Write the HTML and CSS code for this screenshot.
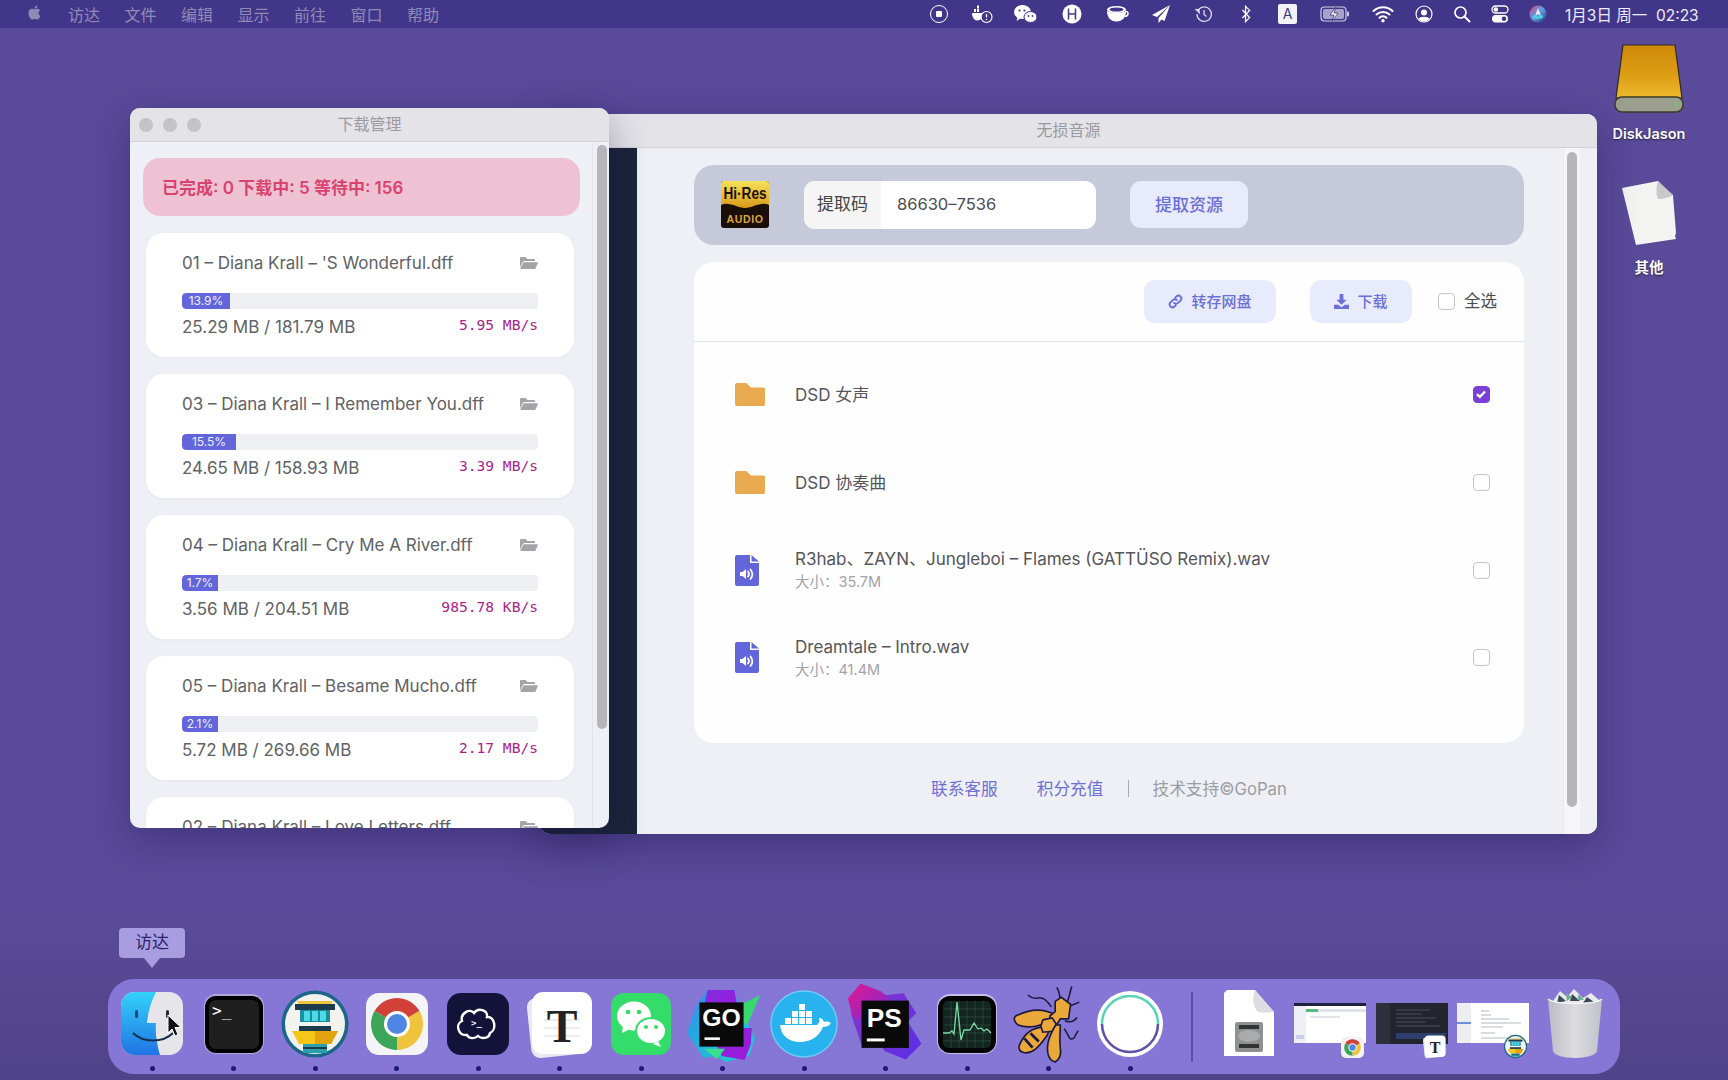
FILE: index.html
```html
<!DOCTYPE html>
<html lang="zh-CN">
<head>
<meta charset="utf-8">
<title>无损音源</title>
<link rel="stylesheet" href="styles.css">
</head>
<body>
<svg class="defs" width="0" height="0" aria-hidden="true">
  <defs>
    <symbol id="folder-open" viewBox="0 0 18 14">
      <path d="M0 12V2a1 1 0 0 1 1-1h4.500l2 2H14a1 1 0 0 1 1 1v1H4.600a2 2 0 0 0-1.800 1.100L0 11.500z"/>
      <path d="M3.600 6.300h13.600c.6 0 .9.5.6 1l-2.300 5.200a1 1 0 0 1-.9.5H1a.6.6 0 0 1-.5-.9z"/>
    </symbol>
    <symbol id="folder" viewBox="0 0 30 23">
      <path d="M0 2a2 2 0 0 1 2-2h9.500L16 4.500h12a2 2 0 0 1 2 2V21a2 2 0 0 1-2 2H2a2 2 0 0 1-2-2z"/>
    </symbol>
    <symbol id="file-audio" viewBox="0 0 24 31">
      <path d="M0 2a2 2 0 0 1 2-2h13v8h9v21a2 2 0 0 1-2 2H2a2 2 0 0 1-2-2z" fill="#6366db"/>
      <path d="M16.500 0 24 6.500h-7.500z" fill="#6366db"/>
      <path d="M5 17h2.500l3.500-3v10l-3.500-3H5z" fill="#fff"/>
      <path d="M13 16.500a4 4 0 0 1 0 5M15.500 14.500a7 7 0 0 1 0 9.500" fill="none" stroke="#fff" stroke-width="1.800" stroke-linecap="round"/>
    </symbol>
    <symbol id="chrome" viewBox="0 0 72 72">
      <path d="M36 36 13.500 23A26 26 0 0 1 58.500 23z" fill="#d2403a"/>
      <path d="M36 36 58.500 23A26 26 0 0 1 36 62z" fill="#f0c33c"/>
      <path d="M36 36 36 62A26 26 0 0 1 13.500 23z" fill="#3ba55a"/>
      <circle cx="36" cy="36" r="13" fill="#fff"/>
      <circle cx="36" cy="36" r="10" fill="#4f86e6"/>
    </symbol>
    <symbol id="tower" viewBox="0 0 72 72">
      <circle cx="36" cy="36" r="33.500" fill="#1c6787"/>
      <circle cx="36" cy="36" r="30" fill="#f2f2ee"/>
      <path d="M18 13h36l-2 3H20z" fill="#f0c33c"/>
      <rect x="16" y="16" width="40" height="6" fill="#1e3b4e"/>
      <rect x="21" y="22" width="30" height="12" fill="#1b8f9f"/>
      <rect x="25" y="23" width="6" height="10" fill="#4ed9e6"/>
      <rect x="33" y="23" width="6" height="10" fill="#4ed9e6"/>
      <rect x="41" y="23" width="6" height="10" fill="#4ed9e6"/>
      <rect x="20" y="38" width="32" height="5" fill="#1e3b4e"/>
      <path d="M13 43h46l-7 13H20z" fill="#f5c518"/>
      <path d="M36 43h23l-7 13H36z" fill="#e2a30f"/>
      <rect x="24" y="56" width="24" height="9" fill="#2a9fb0"/>
      <rect x="24" y="59" width="24" height="2" fill="#1e3b4e"/>
    </symbol>
    <symbol id="typora" viewBox="0 0 72 72">
      <rect x="5" y="8" width="58" height="60" rx="9" fill="#e9e9ef" transform="rotate(-6 34 38)"/>
      <rect x="8" y="4" width="60" height="62" rx="11" fill="#fff"/>
      <path d="M20 24h36M20 32h36M20 40h36M20 48h36" stroke="#ececef" stroke-width="2"/>
      <text x="38" y="54" class="typora-t" text-anchor="middle">T</text>
    </symbol>
    <clipPath id="finder-clip"><rect x="5" y="4" width="62" height="63" rx="14"/></clipPath>
    <linearGradient id="finder-blue" x1="0" y1="0" x2="0" y2="1"><stop offset="0" stop-color="#34d1fa"/><stop offset="1" stop-color="#1f74e4"/></linearGradient>
    <linearGradient id="disk-gold" x1="0" y1="0" x2="0" y2="1"><stop offset="0" stop-color="#d08a0a"/><stop offset=".55" stop-color="#dc9c14"/><stop offset="1" stop-color="#eeb92e"/></linearGradient>
    <linearGradient id="go-a" x1="0" y1="0" x2="1" y2="1"><stop offset="0" stop-color="#2f8cf0"/><stop offset="1" stop-color="#19d8c8"/></linearGradient>
    <linearGradient id="go-b" x1="0" y1="0" x2="1" y2="1"><stop offset="0" stop-color="#7b2ee0"/><stop offset="1" stop-color="#a416d8"/></linearGradient>
    <linearGradient id="ps-a" x1="0" y1="0" x2="1" y2="1"><stop offset="0" stop-color="#e5168c"/><stop offset="1" stop-color="#7a2cd8"/></linearGradient>
    <linearGradient id="ps-b" x1="0" y1="0" x2="1" y2="1"><stop offset="0" stop-color="#8a35c8"/><stop offset="1" stop-color="#5a2ee6"/></linearGradient>
    <linearGradient id="hires" x1="0" y1="0" x2="0" y2="1"><stop offset="0" stop-color="#f6e25a"/><stop offset="1" stop-color="#d79a18"/></linearGradient>
    <linearGradient id="siri" x1="0" y1="0" x2="1" y2="1"><stop offset="0" stop-color="#d8407a"/><stop offset=".5" stop-color="#5aa0e8"/><stop offset="1" stop-color="#2a2a6a"/></linearGradient>
    <linearGradient id="trash" x1="0" y1="0" x2="1" y2="0"><stop offset="0" stop-color="#bdbcc6"/><stop offset=".5" stop-color="#dcdce0"/><stop offset="1" stop-color="#c2c1cb"/></linearGradient>
  </defs>
</svg>

<header class="menubar">
  <svg class="apple" viewBox="0 0 24 24"><path d="M17.050 20.280c-.98.95-2.050.8-3.080.35-1.090-.46-2.090-.48-3.240 0-1.440.62-2.200.44-3.060-.35C2.790 15.250 3.510 7.590 9.050 7.310c1.350.07 2.290.74 3.080.8 1.180-.24 2.310-.93 3.570-.84 1.510.12 2.650.72 3.400 1.800-3.120 1.870-2.380 5.980.48 7.130-.57 1.500-1.310 2.990-2.540 4.090zM12.030 7.250c-.15-2.230 1.660-4.070 3.740-4.250.29 2.580-2.340 4.500-3.740 4.250z"/></svg>
  <nav class="menus">
    <span class="menu-item">访达</span><span class="menu-item">文件</span><span class="menu-item">编辑</span><span class="menu-item">显示</span><span class="menu-item">前往</span><span class="menu-item">窗口</span><span class="menu-item">帮助</span>
  </nav>
  <div class="tray">
    <svg class="tray-icon" viewBox="0 0 20 20"><circle cx="10" cy="10" r="8.500" fill="none" stroke="#fff" stroke-width="1"/><rect x="7" y="7" width="6" height="6" rx="1" fill="#fff"/></svg>
    <svg class="tray-icon" viewBox="0 0 22 20"><path d="M2 9h9a1 1 0 0 1 .5 1.800c-.3 3.600-2 5.700-5 5.700-3 0-4.500-2-5.500-6A1 1 0 0 1 2 9z" fill="#fff"/><path d="M3 5h2v3H3zM6 5h2v3H6zM6 1.500h2v3H6z" fill="#fff"/><circle cx="15.500" cy="13" r="5.500" fill="#42368a" stroke="#fff" stroke-width="1.200"/><path d="M15.500 10v3.500M15.500 15v1" stroke="#fff" stroke-width="1.300"/></svg>
    <svg class="tray-icon wide" viewBox="0 0 24 20"><ellipse cx="9" cy="8" rx="8.500" ry="7" fill="#fff"/><path d="M4 13l-1 4 4-2.500z" fill="#fff"/><ellipse cx="17" cy="13" rx="6.500" ry="5.500" fill="#fff" stroke="#42368a" stroke-width="1"/><circle cx="6" cy="6.500" r="1.100" fill="#42368a"/><circle cx="11" cy="6.500" r="1.100" fill="#42368a"/><circle cx="15" cy="12" r=".9" fill="#42368a"/><circle cx="19" cy="12" r=".9" fill="#42368a"/></svg>
    <svg class="tray-icon" viewBox="0 0 20 20"><circle cx="10" cy="10" r="9.500" fill="#fff"/><path d="M6.500 4.500v11M13.500 4.500v11M6.500 10h7" stroke="#42368a" stroke-width="1.500" fill="none"/></svg>
    <svg class="tray-icon wide" viewBox="0 0 24 20"><ellipse cx="11" cy="5.500" rx="9.500" ry="3.500" fill="#fff"/><path d="M1.500 6.500c0 7 3.500 11 9.500 11s9.500-4 9.500-11c-2 3-17 3-19 0z" fill="#fff"/><path d="M20 7.500c3.500-.5 3.500 4.500-.8 5" fill="none" stroke="#fff" stroke-width="1.500"/><ellipse cx="11" cy="5.500" rx="7" ry="2" fill="#42368a"/></svg>
    <svg class="tray-icon" viewBox="0 0 20 20"><path d="M19 1 1 11l5 2zM19 1 7.500 14v5l3-3.500 3 1.500z" fill="#fff"/></svg>
    <svg class="tray-icon small" viewBox="0 0 18 18"><path d="M3 5.500A7.200 7.200 0 1 1 2 9" fill="none" stroke="#e4e2f0" stroke-width="1.200"/><path d="M1 4.500l3 .2.200 3zM9 5v4.500l2.500 2" fill="none" stroke="#e4e2f0" stroke-width="1.200"/></svg>
    <svg class="tray-icon small" viewBox="0 0 12 20"><path d="M2 5.500l8 8.500-4.500 4.500V1.500L10 6l-8 8.500" fill="none" stroke="#fff" stroke-width="1.400"/></svg>
    <span class="tray-a">A</span>
    <svg class="tray-icon battery" viewBox="0 0 30 18"><rect x="1" y="2" width="25" height="14" rx="3.500" fill="none" stroke="#cfcde0" stroke-width="1.200"/><rect x="3" y="4" width="21" height="10" rx="2" fill="#a7a3c8"/><rect x="27" y="6.500" width="2" height="5" rx="1" fill="#cfcde0"/><path d="M16 2l-6 8h4l-2 6 6-8h-4z" fill="#fff" stroke="#42368a" stroke-width=".8"/></svg>
    <svg class="tray-icon" viewBox="0 0 22 18"><path d="M1.500 6a14 14 0 0 1 19 0M4.500 9.500a9.500 9.500 0 0 1 13 0M7.500 12.800a5 5 0 0 1 7 0" fill="none" stroke="#fff" stroke-width="2" stroke-linecap="round"/><circle cx="11" cy="15.800" r="1.700" fill="#fff"/></svg>
    <svg class="tray-icon small" viewBox="0 0 18 18"><circle cx="9" cy="9" r="8" fill="none" stroke="#fff" stroke-width="1.200"/><circle cx="9" cy="7.500" r="3" fill="#fff"/><path d="M3.500 14c1-3 10-3 11 0a7.500 7.500 0 0 1-11 0z" fill="#fff"/></svg>
    <svg class="tray-icon small" viewBox="0 0 18 18"><circle cx="7.500" cy="7.500" r="5.500" fill="none" stroke="#fff" stroke-width="1.700"/><path d="M11.500 11.500 16.500 16.500" stroke="#fff" stroke-width="2" stroke-linecap="round"/></svg>
    <svg class="tray-icon small" viewBox="0 0 18 18"><rect x="1" y="1" width="16" height="7" rx="3.500" fill="none" stroke="#fff" stroke-width="1.300"/><circle cx="4.800" cy="4.500" r="2.300" fill="#fff"/><rect x="1" y="10" width="16" height="7.500" rx="3.700" fill="#fff"/><circle cx="13" cy="13.700" r="2.300" fill="#42368a"/></svg>
    <svg class="tray-icon small" viewBox="0 0 18 18"><circle cx="9" cy="9" r="8.500" fill="url(#siri)"/><path d="M9 3l3 8-3-2-3 2z" fill="#f2e9ff"/><path d="M3.500 12c2-3 3.500-3 5.500 0 2-3 3.500-3 5.500 0-2 2.500-9 2.500-11 0z" fill="#4fd0e0"/></svg>
  </div>
  <time class="clock">1月3日 周一&nbsp; 02:23</time>
</header>

<main class="desktop">
  <figure class="desk-icon disk">
    <svg class="disk-art" viewBox="0 0 70 72">
      <path d="M9 2h52l7 53H2z" fill="url(#disk-gold)" stroke="#2d2a20" stroke-width="1.200"/>
      <rect x="1" y="54" width="68" height="15" rx="7" fill="#9a9f8e" stroke="#3d3a26" stroke-width="1.500"/>
      <circle cx="62" cy="61.500" r="1.400" fill="#5fcf6a"/>
    </svg>
    <figcaption class="desk-label">DiskJason</figcaption>
  </figure>
  <figure class="desk-icon other">
    <svg class="doc-art" viewBox="0 0 56 66">
      <path d="M1 8 37 1c3 5 8 9 15 14l3 38-1 3 1 3-40 6z" fill="#f4f4f2"/>
      <path d="M37 1c-2 6-2 14 0 18 6 0 13-2 15-4z" fill="#c9c9cc"/>
    </svg>
    <figcaption class="desk-label">其他</figcaption>
  </figure>

  <section class="window app-window">
    <div class="titlebar"><span class="title">无损音源</span></div>
    <div class="app-body">
      <aside class="sidebar"></aside>
      <div class="app-main">
        <div class="app-content">
          <div class="code-bar">
            <svg class="hires" viewBox="0 0 48 47">
              <rect width="48" height="47" rx="3" fill="#1a0f08"/>
              <path d="M0 3a3 3 0 0 1 3-3h42a3 3 0 0 1 3 3v21c-8-4-16 3-24 3S8 20 0 24z" fill="url(#hires)"/>
              <text class="hires-top" text-anchor="middle" transform="translate(24 18) scale(.8 1)">Hi·Res</text>
              <text x="24" y="42" class="hires-bottom" text-anchor="middle">AUDIO</text>
            </svg>
            <div class="code-input">
              <span class="code-label">提取码</span>
              <span class="code-value">86630–7536</span>
            </div>
            <button class="btn btn-fetch">提取资源</button>
          </div>
          <div class="file-card">
            <div class="toolbar">
              <button class="btn btn-save">
                <svg class="btn-icon" viewBox="0 0 16 16"><path d="M6.500 9.500a3 3 0 0 0 4.300 0l2.500-2.500a3 3 0 0 0-4.300-4.300L7.800 3.900M9.500 6.500a3 3 0 0 0-4.300 0L2.700 9a3 3 0 0 0 4.300 4.300l1.200-1.200" fill="none" stroke="#6c6fd6" stroke-width="2" stroke-linecap="round"/></svg>
                转存网盘
              </button>
              <button class="btn btn-down">
                <svg class="btn-icon" viewBox="0 0 16 16"><path d="M6 0h4v6h3.500L8 11.500 2.500 6H6z" fill="#6c6fd6"/><path d="M0 11.500h4.500L8 14l3.500-2.500H16V16H0z" fill="#6c6fd6"/></svg>
                下载
              </button>
              <label class="select-all"><span class="check"></span><span class="select-text">全选</span></label>
            </div>
            <ul class="file-list">
              <li class="file-row">
                <svg class="icon-folder"><use href="#folder"/></svg>
                <div class="file-text"><div class="file-name">DSD 女声</div></div>
                <span class="check checked"><svg viewBox="0 0 12 12"><path d="M2.500 6.200 5 8.500 9.500 3.800" fill="none" stroke="#fff" stroke-width="2"/></svg></span>
              </li>
              <li class="file-row">
                <svg class="icon-folder"><use href="#folder"/></svg>
                <div class="file-text"><div class="file-name">DSD 协奏曲</div></div>
                <span class="check"></span>
              </li>
              <li class="file-row">
                <svg class="icon-file"><use href="#file-audio"/></svg>
                <div class="file-text"><div class="file-name">R3hab、ZAYN、Jungleboi – Flames (GATTÜSO Remix).wav</div><div class="file-size">大小：35.7M</div></div>
                <span class="check"></span>
              </li>
              <li class="file-row">
                <svg class="icon-file"><use href="#file-audio"/></svg>
                <div class="file-text"><div class="file-name">Dreamtale – Intro.wav</div><div class="file-size">大小：41.4M</div></div>
                <span class="check"></span>
              </li>
            </ul>
          </div>
          <footer class="app-footer">
            <a class="foot-link">联系客服</a>
            <a class="foot-link">积分充值</a>
            <span class="foot-sep"></span>
            <span class="foot-note">技术支持©GoPan</span>
          </footer>
        </div>
        <div class="scrolltrack app-track"><div class="scrollthumb app-thumb"></div></div>
      </div>
    </div>
  </section>

  <section class="window dl-window">
    <div class="titlebar">
      <div class="lights"><i class="light"></i><i class="light"></i><i class="light"></i></div>
      <span class="title">下载管理</span>
    </div>
    <div class="dl-body">
      <div class="dl-content">
        <div class="dl-banner">已完成: 0 下载中: 5 等待中: 156</div>
        <article class="dl-card">
          <div class="dl-head"><span class="dl-name">01 – Diana Krall – 'S Wonderful.dff</span><svg class="dl-folder"><use href="#folder-open"/></svg></div>
          <div class="bar"><div class="bar-fill" style="width:48px">13.9%</div></div>
          <div class="dl-stats"><span class="dl-size">25.29 MB / 181.79 MB</span><span class="dl-speed">5.95 MB/s</span></div>
        </article>
        <article class="dl-card">
          <div class="dl-head"><span class="dl-name">03 – Diana Krall – I Remember You.dff</span><svg class="dl-folder"><use href="#folder-open"/></svg></div>
          <div class="bar"><div class="bar-fill" style="width:54px">15.5%</div></div>
          <div class="dl-stats"><span class="dl-size">24.65 MB / 158.93 MB</span><span class="dl-speed">3.39 MB/s</span></div>
        </article>
        <article class="dl-card">
          <div class="dl-head"><span class="dl-name">04 – Diana Krall – Cry Me A River.dff</span><svg class="dl-folder"><use href="#folder-open"/></svg></div>
          <div class="bar"><div class="bar-fill" style="width:36px">1.7%</div></div>
          <div class="dl-stats"><span class="dl-size">3.56 MB / 204.51 MB</span><span class="dl-speed">985.78 KB/s</span></div>
        </article>
        <article class="dl-card">
          <div class="dl-head"><span class="dl-name">05 – Diana Krall – Besame Mucho.dff</span><svg class="dl-folder"><use href="#folder-open"/></svg></div>
          <div class="bar"><div class="bar-fill" style="width:36px">2.1%</div></div>
          <div class="dl-stats"><span class="dl-size">5.72 MB / 269.66 MB</span><span class="dl-speed">2.17 MB/s</span></div>
        </article>
        <article class="dl-card">
          <div class="dl-head"><span class="dl-name">02 – Diana Krall – Love Letters.dff</span><svg class="dl-folder"><use href="#folder-open"/></svg></div>
        </article>
      </div>
      <div class="scrolltrack dl-track"><div class="scrollthumb dl-thumb"></div></div>
    </div>
  </section>

  <div class="tooltip">访达</div>
</main>

<footer class="dock">
  <div class="dock-item">
    <svg class="dock-icon" viewBox="0 0 72 72">
      <g clip-path="url(#finder-clip)">
        <rect x="5" y="4" width="62" height="63" fill="#e6e6ea"/>
        <path d="M5 4h35c-5 10-8 20-9 31h9c-1 10 1 22 4 32H5z" fill="url(#finder-blue)"/>
      </g>
      <rect x="19" y="22" width="3" height="8" rx="1.500" fill="#23466e"/>
      <rect x="50" y="22" width="3" height="8" rx="1.500" fill="#2a2a30"/>
      <path d="M17 45c10 10 30 10 40 0" fill="none" stroke="#18304f" stroke-width="2"/>
      <path d="M52 27v18l4-4 3 7 3-1.500-3-7h6z" fill="#111" stroke="#fff" stroke-width="1"/>
    </svg>
    <i class="dot"></i>
  </div>
  <div class="dock-item">
    <svg class="dock-icon" viewBox="0 0 72 72">
      <rect x="6" y="6" width="60" height="60" rx="12" fill="#b0a8dc"/>
      <rect x="7" y="8" width="58" height="57" rx="11" fill="#000"/>
      <rect x="11" y="12" width="50" height="49" rx="7" fill="#1f1f1f"/>
      <text x="14" y="28" class="term-text">&gt;_</text>
    </svg>
    <i class="dot"></i>
  </div>
  <div class="dock-item"><svg class="dock-icon"><use href="#tower"/></svg><i class="dot"></i></div>
  <div class="dock-item">
    <svg class="dock-icon" viewBox="0 0 72 72"><rect x="5" y="5" width="62" height="62" rx="13" fill="#f4f4f6"/><use href="#chrome" x="0" y="0" width="72" height="72"/></svg>
    <i class="dot"></i>
  </div>
  <div class="dock-item">
    <svg class="dock-icon" viewBox="0 0 72 72">
      <rect x="5" y="5" width="62" height="62" rx="14" fill="#13133a"/>
      <path d="M25 47c-9 1-12-11-5-14-2-8 8-13 12-8 4-6 14-3 13 4 8-1 10 13 3 16-1 6-9 6-12 3-3 3-9 3-11-1z" fill="none" stroke="#fff" stroke-width="2.400"/>
      <text x="29" y="38" class="term-small">&gt;_</text>
    </svg>
    <i class="dot"></i>
  </div>
  <div class="dock-item"><svg class="dock-icon"><use href="#typora"/></svg><i class="dot"></i></div>
  <div class="dock-item">
    <svg class="dock-icon" viewBox="0 0 72 72">
      <rect x="6" y="5" width="60" height="62" rx="13" fill="#34dc6a"/>
      <ellipse cx="29" cy="28" rx="17" ry="14.500" fill="#fff"/>
      <path d="M18 38l-1 7 8-4z" fill="#fff"/>
      <ellipse cx="46" cy="43" rx="15" ry="13" fill="#fff" stroke="#34dc6a" stroke-width="2"/>
      <path d="M53 53l3 6-8-3z" fill="#fff"/>
      <circle cx="23" cy="24" r="2.300" fill="#34dc6a"/><circle cx="34" cy="24" r="2.300" fill="#34dc6a"/>
      <circle cx="41" cy="39" r="2" fill="#34dc6a"/><circle cx="51" cy="39" r="2" fill="#34dc6a"/>
    </svg>
    <i class="dot"></i>
  </div>
  <div class="dock-item">
    <svg class="dock-icon" viewBox="3 3 70 70">
      <path d="M12 20 23 5h26l4 15 21-10-12 28 7 14-6 17-22 6-10-6-12 2-16-24z" fill="url(#go-a)"/>
      <path d="M23 5h26l4 22-35 0z" fill="url(#go-b)"/>
      <path d="M50 42h16l-1 16-6 15-22-4-8-16z" fill="url(#go-b)"/>
      <path d="M53 20l21-10-12 28-14-4z" fill="#39d86e"/>
      <path d="M20 62l12 10 8-10z" fill="#3be08a"/>
      <rect x="15" y="17" width="43" height="43" fill="#0a0a0a"/>
      <text x="36.500" y="40" class="ide-go" text-anchor="middle">GO</text>
      <rect x="20" y="51" width="15" height="2.500" fill="#fff"/>
    </svg>
    <i class="dot"></i>
  </div>
  <div class="dock-item">
    <svg class="dock-icon" viewBox="0 0 72 72">
      <circle cx="36" cy="36" r="33" fill="#28b2ee" stroke="#6fcbf5" stroke-width="1.500"/>
      <path d="M12 37h37c2-2 3-4 2-7 3 0 4 2 5 4 3-1 5 0 7 1-2 3-5 4-8 4-4 10-13 15-23 15-12 0-19-7-20-17z" fill="#fff"/>
      <path d="M17 30h6v6h-6zM24 30h6v6h-6zM31 30h6v6h-6zM38 30h6v6h-6zM24 23h6v6h-6zM31 23h6v6h-6zM38 23h6v6h-6zM31 16h6v6h-6z" fill="#fff"/>
    </svg>
    <i class="dot"></i>
  </div>
  <div class="dock-item">
    <svg class="dock-icon" viewBox="5 5 68.500 68.500">
      <path d="M15 1 34 8l4 4 18-2 12 19-8 8 13 21-15 15-20-8-6-8-16 2L6 30z" fill="url(#ps-b)"/>
      <path d="M15 1 34 8l7 5-4 21H8L3 15z" fill="url(#ps-a)"/>
      <rect x="16" y="17" width="45" height="45" fill="#0a0a0a"/>
      <text x="21" y="42" class="ide-ps">PS</text>
      <rect x="21" y="53" width="17" height="2.800" fill="#fff"/>
    </svg>
    <i class="dot"></i>
  </div>
  <div class="dock-item">
    <svg class="dock-icon" viewBox="0 0 72 72">
      <rect x="6" y="6" width="60" height="60" rx="13" fill="#c6c0e8"/>
      <rect x="7" y="8" width="58" height="57" rx="12" fill="#050505"/>
      <rect x="12" y="13" width="48" height="47" rx="5" fill="#12261f"/>
      <path d="M12 21h48M12 29h48M12 37h48M12 45h48M12 53h48M20 13v47M28 13v47M36 13v47M44 13v47M52 13v47" stroke="#2d4a40" stroke-width=".8"/>
      <path d="M12 45h6l3-2 2 3 3-32 4 38 3-10h6l4-7 4 6 3-1 3 3 3-2 4 4" fill="none" stroke="#7fd8a8" stroke-width="1.300"/>
    </svg>
    <i class="dot"></i>
  </div>
  <div class="dock-item">
    <svg class="dock-icon" viewBox="3 2 70 70">
      <g stroke="#1c1a3c" stroke-width="1.500" stroke-linecap="round" fill="none">
        <path d="M40 20c-4-6-8-10-14-8-2 0-6-1-8-3M50 16c-2-4-1-9-4-14M56 15c2-5 2-8 4-14M57 20l10-4M54 34c5 2 8 1 11-3M53 42c5 7 4 11 9 9l4-7M44 46c1 6-2 10-4 14"/>
      </g>
      <path d="M44 28c-14-8-28-4-38 1-3 2-2 6 2 9 10 4 24 1 33-6z" fill="#eba83a" stroke="#1c1a3c" stroke-width="1.600"/>
      <path d="M44 38c-5 10-9 18-7 28 1 5 4 7 7 8 5-3 6-8 5-14-1-8 0-14 0-22z" fill="#eba83a" stroke="#1c1a3c" stroke-width="1.600"/>
      <path d="M33 40c-10 0-19 6-24 18-1 4 1 6 5 7 8 1 14-6 20-14 3-3 4-7 3-10z" fill="#eba83a" stroke="#1c1a3c" stroke-width="1.600"/>
      <path d="M20 46l8 8M14 51l8 9" stroke="#1c1a3c" stroke-width="2.600"/>
      <path d="M44 15l6-4 9 7-2 14h-8l-3 5-8 1 1-9 5-4z" fill="#eba83a" stroke="#1c1a3c" stroke-width="1.600"/>
      <path d="M32 33l9-2 4 6-4 7-9 1-2-6z" fill="#eba83a" stroke="#1c1a3c" stroke-width="1.600"/>
    </svg>
    <i class="dot"></i>
  </div>
  <div class="dock-item">
    <svg class="dock-icon" viewBox="0 0 72 72">
      <circle cx="36" cy="36" r="33" fill="#fff"/>
      <path d="M8 36a28 28 0 0 1 56 0" fill="none" stroke="#58d3b8" stroke-width="2.500"/>
      <path d="M64 36a28 28 0 0 1-56 0" fill="none" stroke="#5f4fa8" stroke-width="2.500"/>
    </svg>
    <i class="dot"></i>
  </div>
  <span class="dock-sep"></span>
  <div class="dock-item">
    <svg class="dock-icon" viewBox="0 0 72 72">
      <path d="M14 2h28l19 22v44H11V5z" fill="#fff"/>
      <path d="M42 2c-3 8-2 17 3 22 5 1 11 1 16 0z" fill="#dcdce2"/>
      <rect x="22" y="34" width="28" height="30" rx="2" fill="#8e9092"/>
      <rect x="26" y="37" width="20" height="4" fill="#333"/>
      <rect x="26" y="56" width="20" height="4" fill="#333"/>
      <ellipse cx="36" cy="48" rx="11" ry="6" fill="#a9abad"/>
    </svg>
  </div>
  <div class="dock-item">
    <svg class="dock-icon" viewBox="0 0 72 72">
      <rect y="15" width="72" height="40" fill="#fff"/>
      <rect y="15" width="72" height="3" fill="#1c2340"/>
      <rect y="18" width="12" height="37" fill="#eef0f5"/>
      <rect x="12" y="21" width="60" height="3" fill="#dfe3ee"/>
      <rect x="12" y="21" width="12" height="3" fill="#59b87a"/>
      <path d="M16 29h30" stroke="#c5c8d4" stroke-width="1"/>
      <rect x="2" y="47" width="8" height="4" fill="#c8cfe8"/>
      <rect x="47" y="49" width="23" height="21" rx="5" fill="#f2f2f4"/>
      <use href="#chrome" x="47" y="48" width="23" height="23"/>
    </svg>
  </div>
  <div class="dock-item">
    <svg class="dock-icon" viewBox="0 0 72 72">
      <rect y="15" width="72" height="41" fill="#23252e"/>
      <rect y="15" width="14" height="41" fill="#2d2f3a"/>
      <path d="M20 22h34M20 26h26M20 30h40M20 34h30M20 38h44" stroke="#4a4d5c" stroke-width="1"/>
      <rect x="20" y="45" width="50" height="6" fill="#2c3f6e"/>
      <use href="#typora" x="46" y="46" width="25" height="25"/>
    </svg>
  </div>
  <div class="dock-item">
    <svg class="dock-icon" viewBox="0 0 72 72">
      <rect y="15" width="72" height="40" fill="#fff"/>
      <rect y="15" width="14" height="40" fill="#eceef2"/>
      <rect y="34" width="14" height="2" fill="#6c8fd6"/>
      <path d="M24 23h8M24 27h10M24 31h28M24 35h40M24 39h22M24 45h14M24 50h36" stroke="#b7b9c2" stroke-width="1"/>
      <use href="#tower" x="46" y="46" width="25" height="25"/>
    </svg>
  </div>
  <div class="dock-item">
    <svg class="dock-icon" viewBox="0 0 72 72">
      <path d="M9 11c8 6 46 6 54 0l-5 52c-1 4-10 7-22 7s-21-3-22-7z" fill="url(#trash)"/>
      <path d="M14 13 21 3l7 6 7-8 9 9 8-5 9 8c-8 4-42 4-47 0z" fill="#e9e9ec"/>
      <path d="M20 7l7 6-9 2zM33 6l8 7H31zM48 9l7 5-11 1z" fill="#3d4a58"/>
      <path d="M27 5l6 4-5 4zM40 6l5 6-7 0z" fill="#6fae9a"/>
      <path d="M9 11c8 6 46 6 54 0" fill="none" stroke="#f5f5f7" stroke-width="1.500"/>
    </svg>
  </div>
</footer>
</body>
</html>
```

FILE: styles.css
```css
* { box-sizing: border-box; }

html, body { margin: 0; padding: 0; }

body {
  width: 1728px;
  height: 1080px;
  overflow: hidden;
  display: flex;
  flex-direction: column;
  background: linear-gradient(180deg, #5a4b9a 0%, #5a4b9a 84%, #54478f 92%, #4f4389 100%);
  font-family: "Inter", "Noto Sans CJK SC", sans-serif;
  color: #555;
}

.defs { position: absolute; }

/* menu bar */
.menubar {
  height: 28px;
  flex: none;
  display: flex;
  align-items: center;
  background: #42368a;
  padding: 0 22px 0 25px;
  color: #fff;
  font-size: 16px;
}

.apple { width: 19px; height: 21px; fill: #8f8bb4; margin-top: -4px; }

.menus { display: flex; margin-left: 24px; }

.menu-item { width: 56.500px; color: #8f8bb4; font-size: 16px; }

.tray {
  margin-left: auto;
  display: grid;
  grid-template-columns: 43px 43px 45px 47px 45px 41px 45px 39px 45px 49px 47px 35px 41px 35px 41px;
  justify-items: center;
  align-items: center;
}

.tray-icon { width: 22px; height: 20px; display: block; }
.tray-icon.wide { width: 25px; }
.tray-icon.small { width: 18px; height: 18px; }
.tray-icon.battery { width: 30px; height: 18px; }

.tray-a {
  width: 19px;
  height: 20px;
  background: #f2f2f8;
  color: #42368a;
  border-radius: 2px;
  font-size: 14px;
  line-height: 20px;
  text-align: center;
}

.clock { width: 141px; margin-left: 7px; font-size: 15.500px; color: #eeedf6; white-space: nowrap; }

/* desktop */
.desktop { flex: 1; position: relative; }

.desk-icon {
  position: absolute;
  margin: 0;
  display: flex;
  flex-direction: column;
  align-items: center;
  width: 100px;
}

.disk { left: 1599px; top: 15px; }
.other { left: 1599px; top: 152px; }

.disk-art { width: 70px; height: 72px; }
.doc-art { width: 56px; height: 66px; }

.desk-label {
  margin-top: 10px;
  font-size: 14.500px;
  line-height: 18px;
  font-weight: 600;
  color: #fff;
  text-shadow: 0 1px 2px rgba(0, 0, 0, .6);
}

.other .desk-label { margin-top: 13px; }

/* windows */
.window {
  position: absolute;
  display: flex;
  flex-direction: column;
  border-radius: 10px;
  overflow: hidden;
  background: #eff0f5;
  box-shadow: 0 12px 40px rgba(20, 12, 70, .35);
}

.app-window { left: 540px; top: 86px; width: 1057px; height: 720px; }
.dl-window { left: 130px; top: 80px; width: 479px; height: 720px; }

.titlebar {
  height: 34px;
  flex: none;
  display: flex;
  align-items: center;
  justify-content: center;
  position: relative;
  padding-bottom: 3px;
  background: #e4e3e8;
  border-bottom: 1px solid #d3d2d8;
}

.title { font-size: 16px; color: #9b9aa0; }

.lights {
  position: absolute;
  left: 9px;
  top: 10px;
  display: flex;
  gap: 10px;
}

.light { width: 14px; height: 14px; border-radius: 50%; background: #c3c2c7; }

.scrolltrack { flex: none; width: 17px; }

.scrollthumb { width: 10px; margin-left: 4px; border-radius: 5px; background: #b7b5b9; }

/* download window */
.dl-body { flex: 1; display: flex; min-height: 0; }

.dl-content {
  flex: 1;
  min-width: 0;
  padding: 16px 12px 0 13px;
  display: flex;
  flex-direction: column;
  gap: 17px;
  overflow: hidden;
}

.dl-track { border-left: 1px solid #e3e3e9; padding-top: 3px; }
.dl-thumb { height: 584px; }

.dl-banner {
  height: 58px;
  flex: none;
  display: flex;
  align-items: center;
  padding: 0 0 2px 19px;
  border-radius: 17px;
  background: #efc2d3;
  color: #d8426f;
  font-size: 17px;
  font-weight: 600;
}

.dl-card {
  height: 124px;
  flex: none;
  margin: 0 6px 0 3px;
  padding: 18px 36px 0;
  border-radius: 18px;
  background: #fff;
  box-shadow: 0 1px 3px rgba(120, 120, 150, .08);
}

.dl-head { height: 24px; display: flex; align-items: center; justify-content: space-between; }

.dl-name { font-size: 17px; color: #606266; white-space: nowrap; }

.dl-folder { width: 18px; height: 14px; fill: #a3a3a8; }

.bar { height: 16px; margin-top: 18px; border-radius: 4px; background: #eef0f4; overflow: hidden; }

.bar-fill {
  height: 16px;
  border-radius: 4px 0 0 4px;
  background: #6366db;
  color: #eef;
  font-size: 12px;
  line-height: 16px;
  text-align: center;
}

.dl-stats { height: 24px; margin-top: 6px; display: flex; align-items: center; justify-content: space-between; }

.dl-size { font-size: 17px; color: #606266; white-space: nowrap; }

.dl-speed {
  font-family: "DejaVu Sans Mono", monospace;
  font-size: 14.600px;
  color: #a8248c;
  margin-top: -6px;
  white-space: nowrap;
}

/* main window */
.app-body { flex: 1; display: flex; min-height: 0; }

.sidebar { width: 97px; flex: none; background: #1b2539; }

.app-main { flex: 1; display: flex; background: #eff0f5; }

.app-content {
  width: 830px;
  margin-left: 57px;
  padding-top: 16.500px;
  display: flex;
  flex-direction: column;
}

.app-track {
  margin-left: 39px;
  background: #f6f6f9;
  border-left: 1px solid #e8e8ed;
  padding-top: 4px;
}

.app-thumb { height: 655px; margin-left: 3px; }

.code-bar {
  height: 80px;
  flex: none;
  display: flex;
  align-items: center;
  padding-left: 27px;
  border-radius: 20px;
  background: #c5c9da;
}

.hires { width: 48px; height: 47px; }

.hires-top { font: 700 17px "Liberation Sans", sans-serif; fill: #1a0f08; }
.hires-bottom { font: 700 10.500px "Liberation Sans", sans-serif; fill: #d9a53a; letter-spacing: .6px; }

.code-input {
  width: 292px;
  height: 48px;
  margin-left: 35px;
  display: flex;
  border-radius: 11px;
  overflow: hidden;
  background: #fff;
}

.code-label {
  width: 77px;
  background: #f5f5f6;
  color: #444;
  font-size: 17px;
  line-height: 46px;
  text-align: center;
}

.code-value { margin-left: 16px; color: #4b4b50; font-size: 16.500px; line-height: 46px; }

.btn {
  display: flex;
  align-items: center;
  justify-content: center;
  border: 0;
  padding: 0 0 2px;
  background: #e8ebfb;
  color: #6c6fd6;
  font-family: inherit;
  font-weight: 500;
}

.btn-fetch { width: 118px; height: 47px; margin-left: 34px; border-radius: 11px; font-size: 17px; }

.file-card {
  height: 481px;
  flex: none;
  margin-top: 17px;
  border-radius: 20px;
  background: #fefeff;
}

.toolbar {
  height: 80px;
  display: flex;
  align-items: center;
  justify-content: flex-end;
  padding-right: 27px;
  border-bottom: 1px solid #dfe5ec;
}

.btn-save, .btn-down { height: 43px; border-radius: 11px; font-size: 15px; gap: 8px; }
.btn-save { width: 132px; }
.btn-down { width: 102px; margin-left: 34px; }

.btn-icon { width: 15px; height: 15px; margin-top: 2px; }

.select-all {
  display: flex;
  align-items: center;
  gap: 9px;
  margin-left: 26px;
  font-size: 16.500px;
  color: #4a4a4f;
}

.select-text { margin-top: -2px; }

.check {
  width: 17px;
  height: 17px;
  flex: none;
  display: block;
  border: 1.500px solid #c4c4c9;
  border-radius: 4px;
  background: #fff;
}

.check.checked { border-color: #7a3fd6; background: #7a3fd6; }
.check.checked svg { display: block; width: 14px; height: 14px; }

.file-list { list-style: none; margin: 0; padding: 9.500px 34px 0 41px; }

.file-row { height: 87.700px; display: flex; align-items: center; }

.icon-folder { width: 30px; height: 23px; margin-right: 30px; fill: #e9a94f; flex: none; }
.icon-file { width: 24px; height: 31px; margin-right: 36px; flex: none; }

.file-text { flex: 1; min-width: 0; }

.file-name { font-size: 17px; line-height: 24px; color: #55555a; white-space: nowrap; }

.file-size { font-size: 14.500px; line-height: 22px; color: #a3a3a8; }

.app-footer {
  flex: 1;
  display: flex;
  align-items: center;
  font-size: 16.700px;
  padding: 0 0 0 237px;
}

.foot-link { color: #6c6fd6; margin-right: 39px; }
.foot-link + .foot-link { margin-right: 24px; }

.foot-sep { width: 1px; height: 17px; background: #a9a9b0; margin-right: 24px; }

.foot-note { color: #9c9ca3; }

/* tooltip */
.tooltip {
  position: absolute;
  left: 119px;
  top: 900px;
  width: 66px;
  height: 30px;
  border-radius: 4px;
  background: #a99de2;
  color: #2c2468;
  font-size: 17px;
  line-height: 28px;
  text-align: center;
}

.tooltip::after {
  content: "";
  position: absolute;
  left: 25px;
  top: 30px;
  border: 8px solid transparent;
  border-top: 10px solid #a99de2;
  border-bottom: 0;
}

/* dock */
.dock {
  height: 95px;
  flex: none;
  margin: 0 108px 6px;
  padding: 9px 0 0 3.250px;
  display: flex;
  align-items: flex-start;
  border-radius: 26px;
  background: #8677d6;
}

.dock-item {
  width: 81.500px;
  flex: none;
  display: flex;
  flex-direction: column;
  align-items: center;
}

.dock-icon { width: 72px; height: 72px; display: block; overflow: visible; }

.dot { width: 5px; height: 5px; margin-top: 6px; border-radius: 50%; background: #1e1a6e; }

.dock-sep { width: 2px; height: 70px; margin: 4px 15px 0 20px; flex: none; background: #5a4eb0; }

.term-text { font: 16px "DejaVu Sans Mono", monospace; fill: #fff; }
.term-small { font: 700 9px "DejaVu Sans Mono", monospace; fill: #fff; }
.typora-t { font: 700 46px "Liberation Serif", serif; fill: #232326; }
.ide-go { font: 700 24px "Liberation Sans", sans-serif; fill: #fff; }
.ide-ps { font: 700 25px "Liberation Sans", sans-serif; fill: #fff; }
```
